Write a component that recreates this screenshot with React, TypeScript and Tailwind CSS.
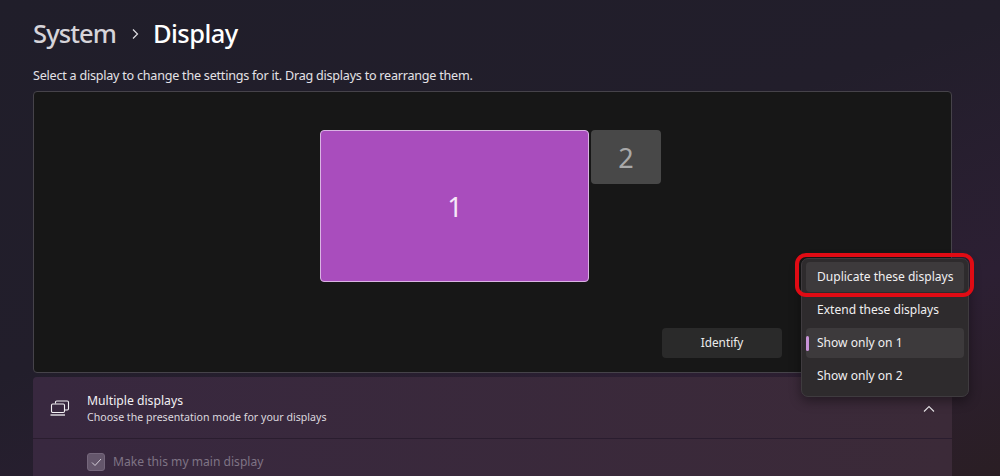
import React from "react";

function DisplaysIcon() {
  return (
    <svg width="20" height="16" viewBox="0 0 20 16" fill="none" stroke="#f2f0f3" strokeWidth="1.1">
      <path d="M5.5 3.5V2.2a1.2 1.2 0 0 1 1.2-1.2h10.6a1.2 1.2 0 0 1 1.2 1.2v6.6a1.2 1.2 0 0 1-1.2 1.2H15" />
      <rect x="1.5" y="4" width="13" height="8.5" rx="1.2" />
      <path d="M0.5 15h14.5" strokeWidth="1.3" />
    </svg>
  );
}

function MenuItem({ label, selected }: { label: string; selected?: boolean }) {
  return (
    <div className={`relative h-[30px] mx-[4px] rounded-[4px] flex items-center pl-[11px] ${selected ? "bg-[#3d3a3c]" : ""}`}>
      {selected && <div className="absolute left-0 top-[8px] h-[15px] w-[3px] rounded-full bg-[#c893d8]" />}
      <span>{label}</span>
    </div>
  );
}

export default function App() {
  return (
    <div
      className="relative h-[476px] w-[1000px] overflow-hidden pl-[33px] text-white bg-[linear-gradient(160deg,#201e2a_0%,#221e2b_45%,#2c1f33_75%,#2a1e24_100%)]"
      style={{ fontFamily: '"Noto Sans", "Open Sans", sans-serif' }}
    >
      <div className="flex items-center h-[34px] mt-[17px] text-[25.5px] font-medium leading-none">
        <span className="text-[#d6d4d9] tracking-[-0.9px]">System</span>
        <svg className="ml-[15px] mr-[13px]" width="9" height="12" viewBox="0 0 9 12" fill="none" stroke="#e0dfe3" strokeWidth="1.2">
          <path d="M2 1.5 6.5 6 2 10.5" />
        </svg>
        <span className="text-white tracking-[-0.6px]">Display</span>
      </div>

      <p className="mt-[15px] h-[20px] text-[12.6px] tracking-[-0.24px] leading-[20px] text-[#e4e2e6]">
        Select a display to change the settings for it. Drag displays to rearrange them.
      </p>

      <div className="relative mt-[5px] w-[919px] h-[282px] rounded-[4px] border border-[#46434a] bg-[#171717]">
        <div className="flex justify-center gap-[2px] pt-[38px] pr-[4px]">
          <div className="w-[269px] h-[152px] pt-[3px] pl-[1px] rounded-[4px] border border-[#d9b3e3] bg-[#a94dbd] flex items-center justify-center text-[27px] text-[#f6e8f8]">
            1
          </div>
          <div className="w-[70px] h-[54px] pt-[2px] rounded-[4px] bg-[#484848] flex items-center justify-center text-[27px] text-[#a9a9a9]">
            2
          </div>
        </div>
        <div className="absolute left-[628px] top-[236px] w-[120px] h-[30px] rounded-[4px] bg-[#2a2a2a] flex items-center justify-center text-[11.8px] text-[#ececec]">
          Identify
        </div>
      </div>

      <div className="mt-[4px] w-[919px] rounded-t-[4px] bg-[linear-gradient(90deg,#38283f,#3b2a38)]">
        <div className="flex items-center h-[62px] border-b border-[#2a1d2f] pl-[17px] pr-[16px]">
          <DisplaysIcon />
          <div className="ml-[17px] flex-1 pt-[2px]">
            <div className="text-[12.2px] leading-[16px] text-[#f2f0f3]">Multiple displays</div>
            <div className="text-[10.6px] leading-[16px] text-[#dcd8df]">Choose the presentation mode for your displays</div>
          </div>
          <svg className="mr-[1px] mt-[2px]" width="12" height="8" viewBox="0 0 12 8" fill="none" stroke="#e8e6ea" strokeWidth="1.1">
            <path d="M1 6.5 6 1.5l5 5" />
          </svg>
        </div>
        <div className="flex items-center h-[46px] pl-[54px]">
          <div className="w-[18px] h-[18px] rounded-[3px] bg-[#64566b] border border-[#75677c] flex items-center justify-center">
            <svg width="11" height="9" viewBox="0 0 11 9" fill="none" stroke="#d3ccd7" strokeWidth="1">
              <path d="M1 4.5 4 7.5 10 1" />
            </svg>
          </div>
          <span className="ml-[8px] text-[12.1px] text-[#7f7485]">Make this my main display</span>
        </div>
      </div>

      <div className="absolute left-[801px] top-[258px] w-[168px] h-[139px] pt-[3px] rounded-[7px] border border-[#3f3b3f] bg-[#2e2b2d] text-[12.05px] text-[#f1f0f1] shadow-[0_4px_12px_rgba(0,0,0,0.4)] flex flex-col gap-[3px]">
        <div className="h-[30px] mx-[4px] rounded-[4px] bg-[#3d3a3c] flex items-center pl-[11px]">Duplicate these displays</div>
        <MenuItem label="Extend these displays" />
        <MenuItem label="Show only on 1" selected />
        <MenuItem label="Show only on 2" />
      </div>
      <div className="absolute left-[795px] top-[253px] w-[179px] h-[44px] rounded-[11px] border-[4px] border-[#e00b14]" />
    </div>
  );
}
